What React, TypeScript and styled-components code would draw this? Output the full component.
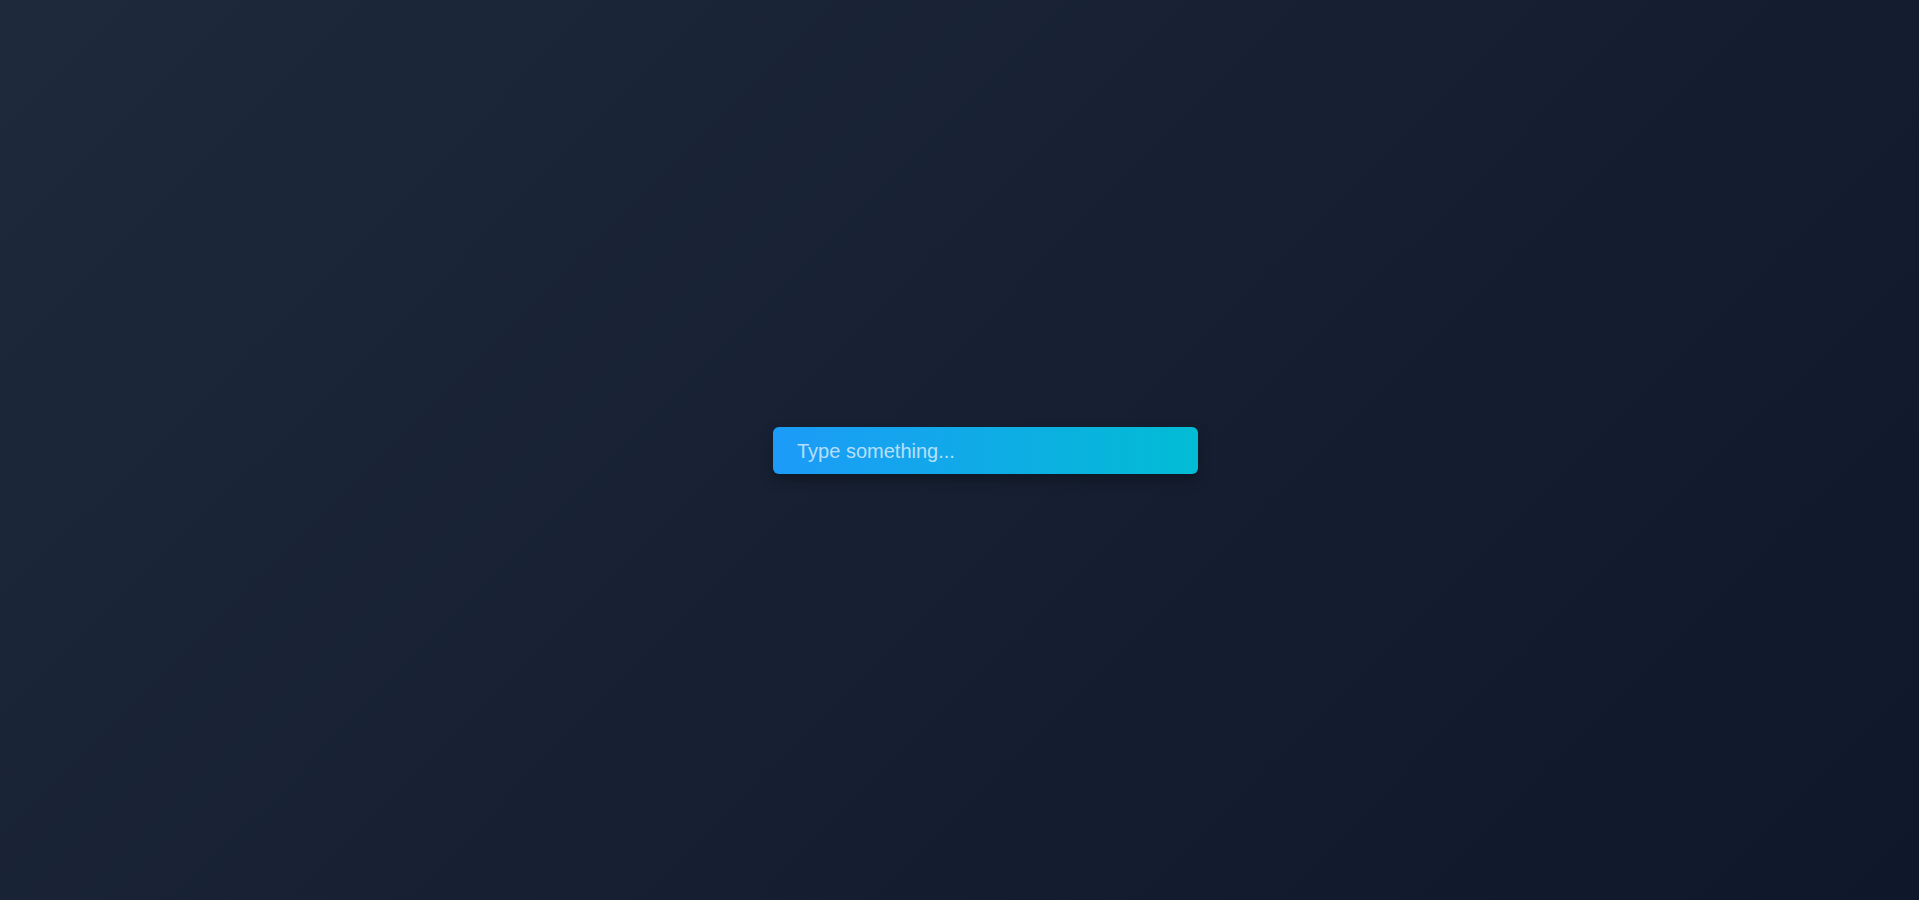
import React, { FC, ReactElement } from 'react';
import styled, { createGlobalStyle } from 'styled-components';

const GlobalStyle = createGlobalStyle`
  html, body {
    margin: 0;
    padding: 0;
    height: 100%;
  }
  body {
    font-family: "Liberation Sans", Arial, sans-serif;
  }
`;

const Page = styled.div`
  width: 100%;
  height: 100vh;
  display: flex;
  align-items: center;
  justify-content: center;
  padding-left: 52px;
  box-sizing: border-box;
  background: linear-gradient(135deg, #1e293b 0%, #0f172a 100%);
`;

const Field = styled.input`
  width: 425px;
  height: 47px;
  box-sizing: border-box;
  padding: 2px 24px 0;
  border: none;
  border-radius: 6px;
  outline: none;
  font-family: "Liberation Sans", Arial, sans-serif;
  font-size: 20px;
  color: #ffffff;
  background: linear-gradient(90deg, #1c9bf8 0%, #02bcd4 100%);
  box-shadow: 0 6px 14px rgba(0, 0, 0, 0.3);

  &::placeholder {
    color: rgba(225, 240, 255, 0.8);
  }
`;

const App: FC = (): ReactElement => (
  <>
    <GlobalStyle />
    <Page>
      <Field type="text" placeholder="Type something..." />
    </Page>
  </>
);

export default App;
